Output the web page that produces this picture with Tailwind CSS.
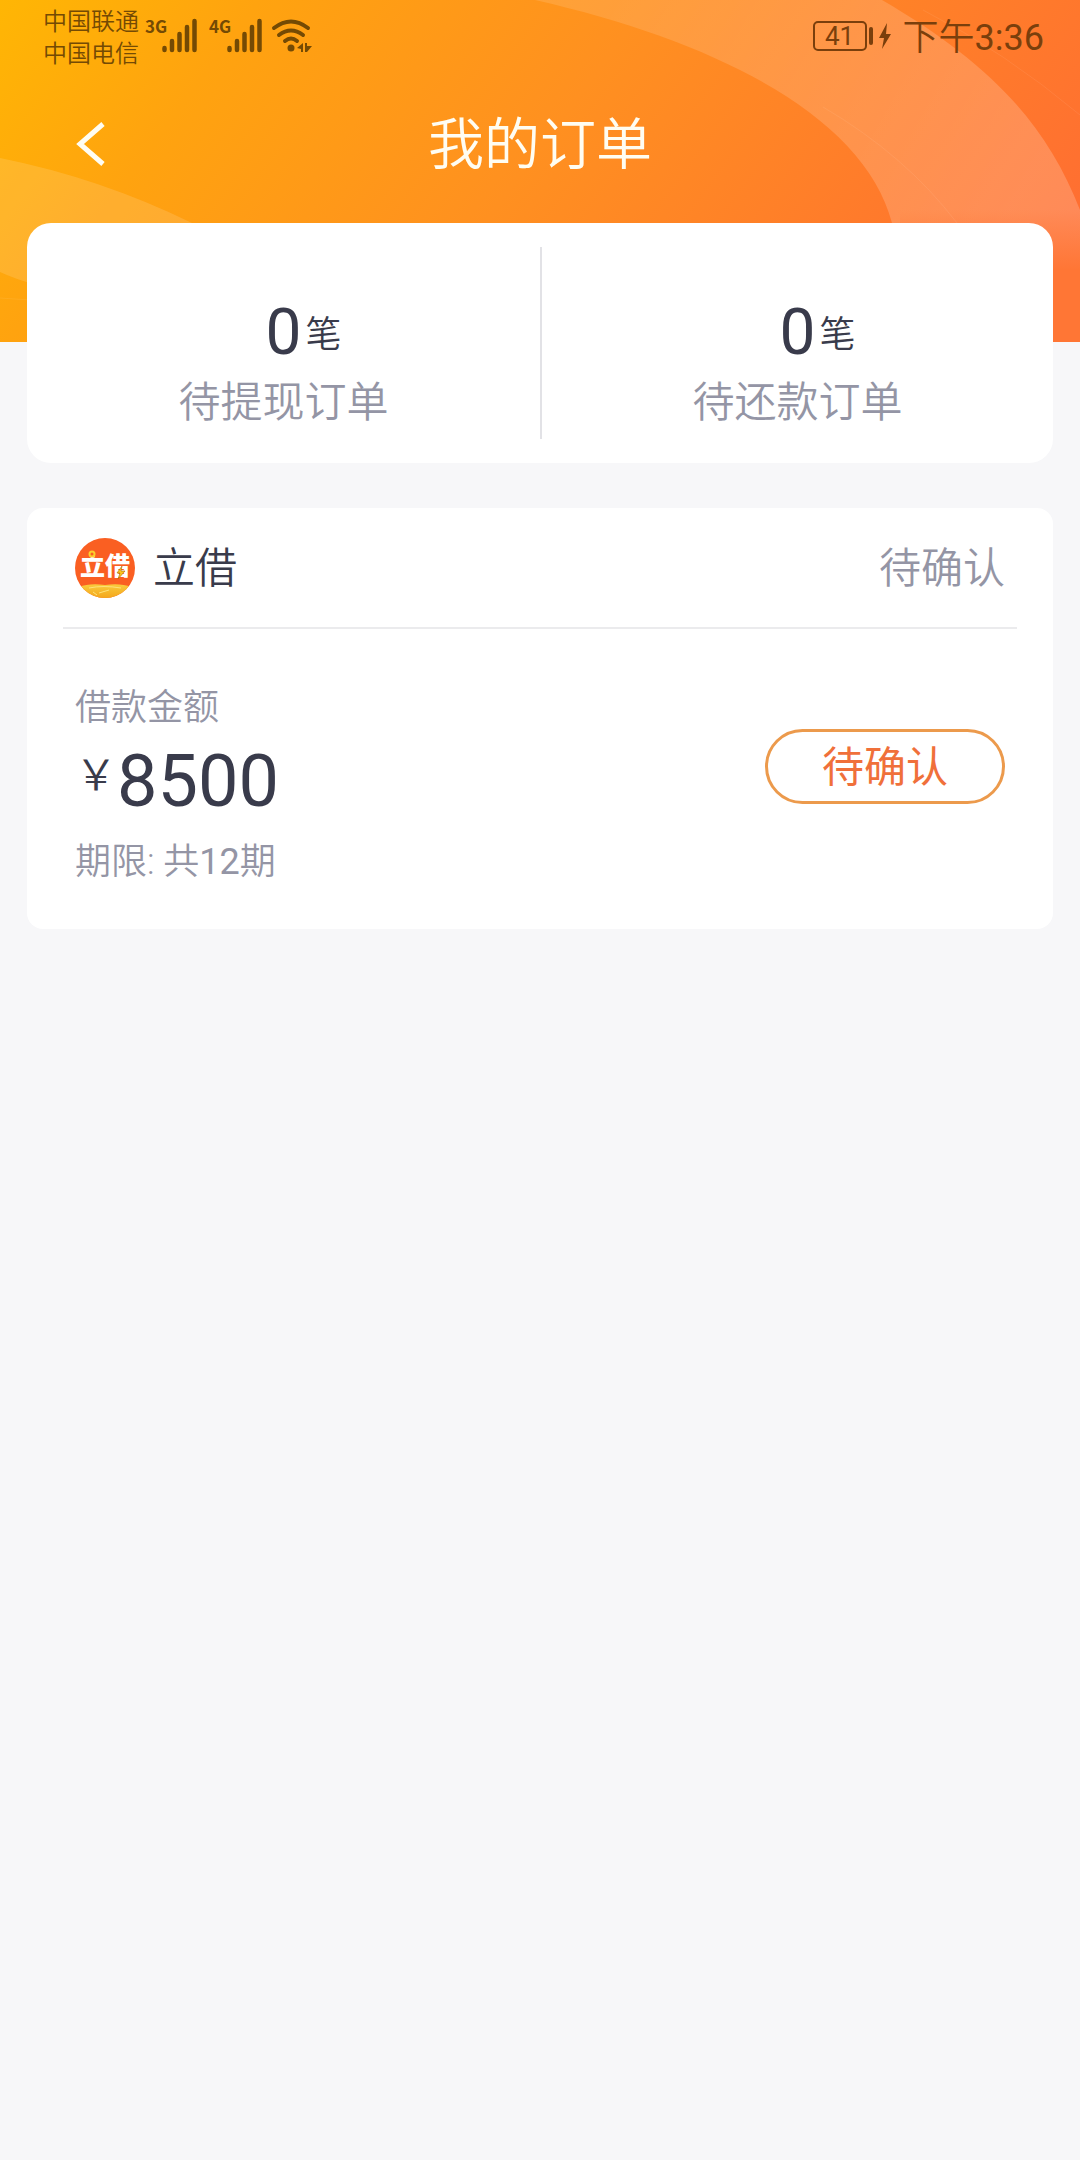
<!DOCTYPE html>
<html lang="zh-CN">
<head>
<meta charset="utf-8">
<meta name="viewport" content="width=device-width, initial-scale=1">
<title>我的订单</title>
<script src="https://cdn.jsdelivr.net/npm/@tailwindcss/browser@4"></script>
</head>
<body class="min-h-screen bg-[#f7f7f9] font-['Roboto','Noto_Sans_CJK_SC',sans-serif] font-[350] text-[#393b4b]">
<header class="relative h-[342px] overflow-hidden bg-[#ff9a18]">
  <svg class="absolute inset-0 h-full w-full" viewBox="0 0 1080 342" preserveAspectRatio="none" aria-hidden="true">
    <defs>
      <linearGradient id="base" gradientUnits="userSpaceOnUse" x1="0" y1="0" x2="840" y2="620">
        <stop offset="0" stop-color="#ffb604"/>
        <stop offset=".2" stop-color="#ffa30f"/>
        <stop offset=".5" stop-color="#ff9020"/>
        <stop offset="1" stop-color="#ff6b33"/>
      </linearGradient>
      <linearGradient id="ring" gradientUnits="userSpaceOnUse" x1="600" y1="0" x2="1000" y2="220">
        <stop offset="0" stop-color="#fff" stop-opacity=".12"/>
        <stop offset="1" stop-color="#fff" stop-opacity=".19"/>
      </linearGradient>
      <linearGradient id="fade" x1="0" y1="0" x2="0" y2="1">
        <stop offset="0" stop-color="#ff7635" stop-opacity="0"/>
        <stop offset="1" stop-color="#ff7635"/>
      </linearGradient>
    </defs>
    <path fill="url(#base)" d="M0 0H1080V342H0Z"/>
    <path fill="url(#ring)" d="M535 0C720 42 865 118 892 223V342H1080V210C1045 120 985 60 882 0Z"/>
    <path fill="url(#fade)" d="M900 210H1080V270H900Z"/>
    <path fill="#ff7635" d="M900 270H1080V342H900Z"/>
    <path fill="#fff" fill-opacity=".13" d="M0 158Q100 178 192 223V300Q60 300 0 272Z"/>
    <path fill="none" stroke="#fff" stroke-opacity=".07" stroke-width="1" d="M923 10Q1005 52 1080 115M823 107Q905 155 957 223M0 298L30 300"/>
  </svg>
  <div class="relative flex h-[72px] items-center justify-between pr-9 pl-[43px]">
    <div class="flex items-center text-[#744a04]">
      <div class="pt-1 text-[24px] leading-[32px]"><p>中国联通</p><p>中国电信</p></div>
      <svg class="ml-[2px] h-[60px] w-[180px]" viewBox="141 6 180 60" fill="currentColor" role="img" aria-label="3G 4G WLAN">
        <text x="145" y="33" font-size="17" font-weight="700" font-family="'Liberation Sans Narrow','Noto Sans CJK SC'">3G</text>
        <text x="209" y="33" font-size="17" font-weight="700" font-family="'Liberation Sans Narrow','Noto Sans CJK SC'">4G</text>
        <g fill="none" stroke="currentColor" stroke-width="4.5" stroke-linecap="round">
          <path d="M164.500 48V50M172 41V50M179.500 34V50M187 27V50M194.500 21V50"/>
          <path d="M229.500 48V50M237 41V50M244.500 34V50M252 27V50M259.500 21V50"/>
          <path stroke-width="4" d="M274 28Q291 15 308 28M279 35Q291 26 303 35M285 41Q291 36 297 41"/>
        </g>
        <circle cx="291" cy="48" r="3.500"/>
        <path d="M297 48L303 43V52H301V49ZM305 43H307V46L312 46L307 52H305Z"/>
      </svg>
    </div>
    <div class="flex items-center text-[#7a3f0c]">
      <div class="flex h-[30px] w-[54px] items-center justify-center rounded-[5px] border-2 border-current text-[26px] leading-none font-normal">41</div>
      <svg class="mr-2 h-[30px] w-7" viewBox="0 0 28 30" fill="currentColor" aria-hidden="true">
        <rect x="2" y="6" width="4" height="18" rx="2"/>
        <path d="M20 2L12 17H17L15 28L24 13H19Z"/>
      </svg>
      <span class="pt-[3px] text-[36px]">下午<span class="font-normal">3:36</span></span>
    </div>
  </div>
  <div class="relative grid h-[144px] grid-cols-[1fr_auto_1fr] items-center text-[#fffdf2]">
    <button class="ml-[72px] w-10" aria-label="返回"><svg class="h-12 w-10" viewBox="0 0 40 48" fill="none" stroke="currentColor" stroke-width="5"><path d="M31 4L8 24L31 44"/></svg></button>
    <h1 class="pt-[2px] text-[56px]">我的订单</h1>
  </div>
</header>

<main class="relative -mt-[119px] flex flex-col gap-[45px] px-[27px]">
  <section class="grid grid-cols-2 rounded-3xl bg-white py-6 text-center">
    <div class="pt-12 pb-[10px]">
      <div class="grid grid-cols-[1fr_auto_1fr] items-center leading-[76px]">
        <span class="col-start-2 text-[64px] font-normal">0</span>
        <span class="pt-1 pl-1 text-left text-[36px] leading-[72px]">笔</span>
      </div>
      <p class="mt-[6px] text-[42px] leading-[52px] text-[#9495a5]">待提现订单</p>
    </div>
    <div class="border-l-2 border-[#e2e2e6] pt-12 pb-[10px]">
      <div class="grid grid-cols-[1fr_auto_1fr] items-center leading-[76px]">
        <span class="col-start-2 text-[64px] font-normal">0</span>
        <span class="pt-1 pl-1 text-left text-[36px] leading-[72px]">笔</span>
      </div>
      <p class="mt-[6px] text-[42px] leading-[52px] text-[#9495a5]">待还款订单</p>
    </div>
  </section>

  <section class="rounded-2xl bg-white px-9">
    <div class="flex h-[121px] items-center border-b-2 border-[#ebebed] px-3">
      <svg class="h-[60px] w-[60px]" viewBox="0 0 60 60" aria-hidden="true">
        <defs>
          <clipPath id="disc"><circle cx="30" cy="30" r="30"/></clipPath>
          <linearGradient id="gold" x1="0" y1="0" x2="0" y2="1"><stop offset="0" stop-color="#f9cb3c"/><stop offset="1" stop-color="#f4a71c"/></linearGradient>
        </defs>
        <g clip-path="url(#disc)">
          <path fill="#fa5f22" d="M0 0H60V60H0Z"/>
          <path fill="url(#gold)" d="M4 49Q14 45 30 47Q46 45 56 49V60H4Z"/>
          <path fill="none" stroke="#fde27a" d="M14 50Q28 47 46 50M24 55L34 52M18 54L22 57"/>
        </g>
        <text x="30" y="37" text-anchor="middle" font-size="25" font-weight="900" fill="#fff" font-family="'Noto Sans CJK SC',sans-serif">立借</text>
        <circle cx="17" cy="16" r="2.500" fill="#fa5f22" stroke="#fbd02c" stroke-width="2"/>
        <path fill="#fbc81e" stroke="#a8690c" stroke-width=".6" d="M47 28L42 35H45L43 41L50 33H46Z"/>
      </svg>
      <h2 class="ml-[18px] pt-[2px] text-[42px]">立借</h2>
      <span class="ml-auto pt-[2px] text-[42px] text-[#9495a5]">待确认</span>
    </div>
    <div class="flex items-start justify-between px-3 pt-[55px] pb-[37px]">
      <div class="text-[36px]">
        <p class="leading-[48px] text-[#9495a5]">借款金额</p>
        <p class="flex leading-[100px]"><span class="text-[42px] leading-[88px]">￥</span><span class="text-[72px] font-normal">8500</span></p>
        <p class="leading-[60px] text-[#9495a5]">期限: 共<span class="font-normal">12</span>期</p>
      </div>
      <button class="mt-[45px] h-[75px] w-60 rounded-full border-3 border-[#ec9a4c] pt-[2px] text-[42px] font-normal text-[#f0703a]">待确认</button>
    </div>
  </section>
</main>
</body>
</html>
